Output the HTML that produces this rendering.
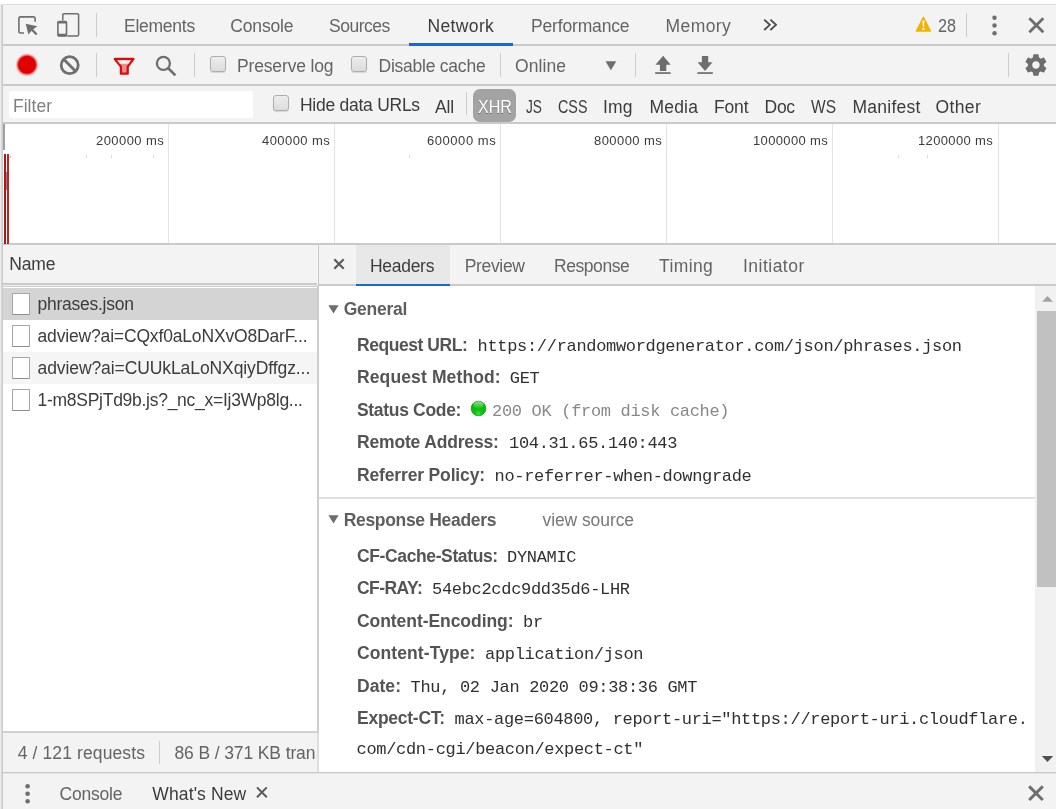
<!DOCTYPE html>
<html lang="en"><head><meta charset="utf-8"><title>DevTools - Network</title>
<style>
html,body{margin:0;padding:0;}
body{width:1056px;height:809px;overflow:hidden;background:#fff;position:relative;font-family:"Liberation Sans",sans-serif;font-size:17px;color:#5a5a5a;}
.abs,.t,svg.i{position:absolute;}
.t{white-space:nowrap;line-height:24px;height:24px;}
.bar{position:absolute;left:3px;right:0;background:#f3f3f3;border-bottom:2px solid #cacaca;}
.vsep{position:absolute;width:1px;background:#ccc;}
.cb{position:absolute;width:14px;height:14px;border:1px solid #adadad;border-radius:3px;background:linear-gradient(#ededed,#dcdcdc);box-shadow:0 1px 1px rgba(0,0,0,.12);}
.grid{position:absolute;top:124px;width:1px;height:119px;background:#e3e3e3;}
.row{position:absolute;left:3px;width:314px;height:32px;}
.ficon{position:absolute;left:12px;width:16px;height:20px;border:1px solid #a6a6a6;border-bottom-color:#8e8e8e;background:#fff;border-radius:1px;}
.m{font-family:"Liberation Mono",monospace;}
.tick{position:absolute;top:155px;width:1px;height:3px;background:#dcdcdc;}
.grp{position:absolute;left:0;top:0;will-change:transform;}

</style></head>
<body>
<!-- outer frame -->
<div class="abs" style="left:0;top:4px;width:1px;height:805px;background:#ececec"></div>
<div class="abs" style="left:1px;top:5px;width:1px;height:804px;background:#d8d8d8"></div>
<div class="abs" style="left:2px;top:5px;width:1px;height:804px;background:#cbcbcb"></div>
<div class="abs" style="left:1px;top:4px;width:1055px;height:1px;background:#dcdcdc"></div>

<!-- main tab bar -->
<div class="bar" id="tabbar" style="top:5px;height:39px;">
  <div class="abs" style="left:406px;top:38.300px;width:104px;height:2.600px;background:#1b66d6"></div>
  <div class="vsep" style="left:93px;top:8px;height:24px"></div>
  <div class="vsep" style="left:963px;top:8px;height:24px"></div>
</div>
<!-- network toolbar -->
<div class="bar" id="toolbar" style="top:46px;height:38px;">
  <div class="vsep" style="left:93px;top:7px;height:24px"></div>
  <div class="vsep" style="left:191px;top:7px;height:24px"></div>
  <div class="vsep" style="left:497px;top:7px;height:24px"></div>
  <div class="vsep" style="left:632px;top:7px;height:24px"></div>
  <div class="vsep" style="left:1005px;top:7px;height:24px"></div>
  <div class="cb" style="left:207px;top:10px"></div>
  <div class="cb" style="left:348px;top:10px"></div>
</div>
<!-- filter bar -->
<div class="bar" id="filterbar" style="top:86px;height:36px;">
  <div class="abs" style="left:6px;top:5px;width:244px;height:27px;background:#fff;border-radius:2px"></div>
  <div class="cb" style="left:270px;top:9px"></div>
  <div class="vsep" style="left:463px;top:6px;height:23px"></div>
  <div class="abs" style="left:470px;top:3px;width:43px;height:32.500px;border-radius:7px;background:#a3a3a3"></div>
</div>
<!-- overview -->
<div class="abs" id="overview" style="left:3px;top:124px;width:1053px;height:119px;background:#fff;border-bottom:2px solid #cacaca"></div>
<div class="grid" style="left:168px"></div><div class="grid" style="left:334px"></div><div class="grid" style="left:500px"></div>
<div class="grid" style="left:666px"></div><div class="grid" style="left:832px"></div><div class="grid" style="left:998px"></div>
<div class="abs" style="left:3px;top:124px;width:2px;height:26px;background:#a0a0a0"></div>
<div class="abs" style="left:3.500px;top:154px;width:2.500px;height:90px;background:#b01818"></div>
<div class="abs" style="left:7px;top:154px;width:2px;height:90px;background:#bf2424"></div>
<div class="abs" style="left:6px;top:172px;width:1px;height:18px;background:#78909c"></div>
<div class="abs" style="left:10px;top:156px;width:1px;height:2px;background:#f3b0b0"></div>
<div class="tick" style="left:86px"></div><div class="tick" style="left:111px"></div><div class="tick" style="left:153px"></div><div class="tick" style="left:409px"></div><div class="tick" style="left:666px"></div><div class="tick" style="left:898px"></div><div class="tick" style="left:927px"></div>

<!-- left pane: request list -->
<div class="abs" id="namehdr" style="left:3px;top:245px;width:314px;height:38px;background:#f3f3f3;border-bottom:2px solid #cacaca"></div>
<div class="abs" style="left:3px;top:285px;width:314px;height:1px;background:#f0f0f0"></div>
<div class="abs" style="left:3px;top:286px;width:314px;height:1px;background:#cdcdcd"></div>
<div class="row" style="top:288px;background:#d4d4d4"></div>
<div class="row" style="top:352px;background:#f5f5f5"></div>
<div class="ficon" style="top:293px"></div>
<div class="ficon" style="top:325px"></div>
<div class="ficon" style="top:357px"></div>
<div class="ficon" style="top:389px"></div>
<div class="abs" id="status" style="left:3px;top:731px;width:314px;height:39px;background:#f3f3f3;border-top:2px solid #d0d0d0">
  <div class="vsep" style="left:156px;top:8px;height:23px"></div>
</div>
<div class="abs" style="left:317px;top:245px;width:1px;height:38px;background:#f7f7f7"></div>
<div class="abs" style="left:318px;top:245px;width:1px;height:40px;background:#c8c8c8"></div>
<div class="abs" style="left:317px;top:285px;width:2px;height:448px;background:#cdcdcd"></div>
<div class="abs" style="left:317px;top:733px;width:2px;height:39px;background:#dedede"></div>

<!-- right pane: details -->
<div class="abs" id="dtabs" style="left:319px;top:245px;width:737px;height:39px;background:#f3f3f3;border-bottom:2px solid #cacaca">
  <div class="abs" style="left:37px;top:0;width:94px;height:39px;background:#e8e8e8"></div>
  <div class="abs" style="left:37px;top:38.600px;width:94px;height:2.500px;background:#1b66d6"></div>
</div>
<div class="abs" style="left:319px;top:497px;width:716px;height:2px;background:#e0e0e0"></div>
<!-- scrollbar -->
<div class="abs" style="left:1035px;top:286px;width:21px;height:486px;background:#f1f1f1"></div>
<div class="abs" style="left:1037px;top:311px;width:19px;height:275.500px;background:#c1c1c1"></div>

<!-- drawer -->
<div class="abs" id="drawer" style="left:3px;top:772px;width:1053px;height:36px;background:#f3f3f3;border-top:1px solid #cbcbcb"></div>
<div class="abs" style="left:3px;top:773px;width:1053px;height:1px;background:#e2e2e2"></div>

<!-- icons -->
<svg class="i" id="icons" style="left:0;top:0" width="1056" height="809" viewBox="0 0 1056 809">
  <defs>
    <radialGradient id="rec" cx="50%" cy="50%" r="50%"><stop offset="0" stop-color="#e00000"/><stop offset="0.70" stop-color="#e00000"/><stop offset="0.80" stop-color="#ee7070"/><stop offset="1" stop-color="#f3c8c8" stop-opacity="0"/></radialGradient>
    <radialGradient id="ball" cx="50%" cy="85%" r="75%"><stop offset="0" stop-color="#3fe03f"/><stop offset="0.350" stop-color="#0cc20c"/><stop offset="1" stop-color="#0ab40a"/></radialGradient>
    <linearGradient id="gloss" x1="0" y1="0" x2="0" y2="1"><stop offset="0" stop-color="#fff" stop-opacity="0.550"/><stop offset="1" stop-color="#fff" stop-opacity="0.050"/></linearGradient>
  </defs>
  <!-- inspect element -->
  <g fill="none" stroke="#6e6e6e" stroke-width="1.6" stroke-linejoin="round" stroke-linecap="butt">
    <path d="M24 33H20.5a1.6 1.6 0 0 1-1.600-1.600V18.500a1.600 1.600 0 0 1 1.600-1.600h13a1.600 1.600 0 0 1 1.600 1.600V21.800"/>
  </g>
  <path d="M25.700 23.700L37.400 26.300L33.200 29.200L37.500 33.700L35.900 35.200L31.500 30.700L28.400 34.600Z" fill="#6e6e6e"/>
  <!-- device toggle -->
  <g fill="none" stroke="#6e6e6e">
    <path d="M62.800 20.500V15a1.200 1.200 0 0 1 1.200-1.200h13.400a1.200 1.200 0 0 1 1.200 1.200v19.700a1.200 1.200 0 0 1-1.200 1.200H67.300" stroke-width="1.500"/>
    <rect x="57.900" y="21.600" width="8.600" height="14.400" rx="1" stroke-width="1.600"/>
    <path d="M57.900 22.300h8.600M57.900 35h8.600" stroke-width="2.400"/>
  </g>
  <!-- record -->
  <circle cx="27" cy="64.800" r="12" fill="url(#rec)"/>
  <!-- clear -->
  <g fill="none" stroke="#6e6e6e" stroke-width="2.800"><circle cx="69.700" cy="65.200" r="8.500"/><path d="M63.700 59.300L75.600 71.200"/></g>
  <!-- filter funnel -->
  <path d="M114.800 59H133.400L127.700 66.600V73.700H120.900V66.600Z" fill="#f08c8c" stroke="#d90c0c" stroke-width="2.300" stroke-linejoin="round"/>
  <path d="M117.200 60.150H131L128.500 63.700H119.800Z" fill="#f3f3f3"/>
  <!-- search -->
  <g fill="none" stroke="#6e6e6e" stroke-width="2.300"><circle cx="163.400" cy="63.400" r="6.500"/><path d="M168 68L175.400 75.400" stroke-width="2.600"/></g>
  <!-- throttling dropdown arrow -->
  <path d="M605.500 61.300H616.300L610.900 70.200Z" fill="#6e6e6e"/>
  <!-- import / export HAR -->
  <g fill="#6e6e6e">
    <path d="M663.100 55.800L670.700 64.700H666.300V70.900H659.900V64.700H655.500Z"/><rect x="655.200" y="72.200" width="15.500" height="1.700"/>
    <path d="M701.900 56H708.200V62.200H712.500L705.050 71.100L697.600 62.200H701.900Z"/><rect x="697.300" y="72.200" width="15.500" height="1.700"/>
  </g>
  <!-- settings gear -->
  <g transform="translate(1023.100 52.200) scale(1.070)"><path fill="#6e6e6e" d="M19.430 12.980c.04-.32.070-.64.070-.98s-.03-.66-.07-.98l2.110-1.650c.19-.15.240-.42.120-.64l-2-3.460c-.12-.22-.39-.3-.61-.22l-2.490 1c-.52-.4-1.080-.73-1.690-.98l-.38-2.650C14.460 2.180 14.250 2 14 2h-4c-.25 0-.46.180-.49.420l-.38 2.650c-.61.250-1.170.59-1.690.98l-2.490-1c-.23-.09-.49 0-.61.220l-2 3.460c-.13.220-.07.490.12.640l2.110 1.650c-.04.320-.07.650-.07.980s.03.660.07.980l-2.110 1.650c-.19.150-.24.420-.12.640l2 3.460c.12.220.39.300.61.220l2.490-1c.52.400 1.080.73 1.690.98l.38 2.650c.03.240.24.420.49.420h4c.25 0 .46-.18.490-.42l.38-2.650c.61-.25 1.170-.59 1.690-.98l2.490 1c.23.090.49 0 .61-.22l2-3.460c.12-.22.070-.49-.12-.64l-2.110-1.650zM12 15.500c-1.930 0-3.500-1.570-3.500-3.500s1.570-3.500 3.500-3.500 3.500 1.570 3.500 3.500-1.570 3.500-3.500 3.500z"/></g>
  <!-- more tabs chevrons -->
  <g fill="none" stroke="#4a4a4a" stroke-width="1.800"><path d="M764.200 19.600L769.800 24.800L764.200 30"/><path d="M770.400 19.600L776 24.800L770.400 30"/></g>
  <!-- warning -->
  <path d="M923.400 17.400L930.400 31.100H916.400Z" fill="#f0b400" stroke="#f0b400" stroke-width="1.400" stroke-linejoin="round"/>
  <path d="M922.500 20.500h1.900l-.35 6.600h-1.200zM922.500 28.100h1.900v1.800h-1.900z" fill="#fff"/>
  <!-- main menu + close -->
  <g fill="#6e6e6e"><circle cx="994.500" cy="17.800" r="2.200"/><circle cx="994.500" cy="25.500" r="2.200"/><circle cx="994.500" cy="33.200" r="2.200"/></g>
  <path d="M1029.300 18.300L1043.300 32.300M1043.300 18.300L1029.300 32.300" stroke="#6e6e6e" stroke-width="2.800" fill="none"/>
  <!-- details close -->
  <path d="M334.300 259.300L343.700 268.700M343.700 259.300L334.300 268.700" stroke="#5a5a5a" stroke-width="2.200" fill="none"/>
  <!-- section triangles -->
  <path d="M328.400 305.300H338.600L333.500 313.400Z" fill="#6e6e6e"/>
  <path d="M328.400 515.300H338.600L333.500 523.400Z" fill="#6e6e6e"/>
  <!-- status ball -->
  <circle cx="478.500" cy="408.500" r="7.300" fill="url(#ball)" stroke="#0b9a0b" stroke-width="0.800"/>
  <ellipse cx="478.500" cy="405" rx="5.200" ry="3.400" fill="url(#gloss)"/>
  <!-- scrollbar arrows -->
  <path d="M1042 301.800H1053L1047.500 296Z" fill="#a3a3a3"/>
  <path d="M1041.800 755.900H1053.200L1047.500 762Z" fill="#505050"/>
  <!-- drawer menu + closes -->
  <g fill="#6e6e6e"><circle cx="27.600" cy="786.200" r="2.300"/><circle cx="27.600" cy="793.700" r="2.300"/><circle cx="27.600" cy="801.300" r="2.300"/></g>
  <path d="M257 787.400L266.800 797.200M266.800 787.400L257 797.200" stroke="#5a5a5a" stroke-width="2" fill="none"/>
  <path d="M1029.200 786.400L1042.800 800M1042.800 786.400L1029.200 800" stroke="#6e6e6e" stroke-width="2.900" fill="none"/>
</svg>

<div class="grp" id="tab-labels">
  <span class="t" style="left:124.00px;top:14.00px;font-size:17.5px;color:#646464;letter-spacing:-0.260px;">Elements</span>
  <span class="t" style="left:230.30px;top:14.00px;font-size:17.5px;color:#646464;letter-spacing:-0.157px;">Console</span>
  <span class="t" style="left:329.00px;top:14.00px;font-size:17.5px;color:#646464;letter-spacing:-0.493px;">Sources</span>
  <span class="t" style="left:427.50px;top:14.00px;font-size:17.5px;color:#3c3c3c;letter-spacing:0.356px;">Network</span>
  <span class="t" style="left:531.00px;top:14.00px;font-size:17.5px;color:#646464;letter-spacing:-0.161px;">Performance</span>
  <span class="t" style="left:665.50px;top:14.00px;font-size:17.5px;color:#646464;letter-spacing:0.418px;">Memory</span>
  <span class="t" style="left:938.00px;top:14.00px;font-size:17.5px;color:#646464;transform:scaleX(0.9246);transform-origin:0 0;">28</span>
</div>
<div class="grp" id="toolbar-labels">
  <span class="t" style="left:237.00px;top:54.00px;font-size:17.5px;color:#646464;letter-spacing:-0.152px;">Preserve log</span>
  <span class="t" style="left:378.50px;top:54.00px;font-size:17.5px;color:#646464;letter-spacing:-0.234px;">Disable cache</span>
  <span class="t" style="left:515.00px;top:54.00px;font-size:17.5px;color:#646464;letter-spacing:0.074px;">Online</span>
</div>
<div class="grp" id="filter-labels">
  <span class="t" style="left:13.00px;top:94.00px;font-size:17.5px;color:#808080;letter-spacing:0.020px;">Filter</span>
  <span class="t" style="left:300.00px;top:93.00px;font-size:17.5px;color:#3c3c3c;letter-spacing:-0.263px;">Hide data URLs</span>
  <span class="t" style="left:435.00px;top:95.00px;font-size:17.5px;color:#3c3c3c;letter-spacing:-0.181px;">All</span>
  <span class="t" style="left:477.50px;top:95.00px;font-size:17.5px;color:#fff;text-shadow:0 1px 0 rgba(0,0,0,.35);transform:scaleX(0.9201);transform-origin:0 0;">XHR</span>
  <span class="t" style="left:526.00px;top:95.00px;font-size:17.5px;color:#3c3c3c;transform:scaleX(0.7829);transform-origin:0 0;">JS</span>
  <span class="t" style="left:557.50px;top:95.00px;font-size:17.5px;color:#3c3c3c;transform:scaleX(0.8198);transform-origin:0 0;">CSS</span>
  <span class="t" style="left:603.00px;top:95.00px;font-size:17.5px;color:#3c3c3c;letter-spacing:0.125px;">Img</span>
  <span class="t" style="left:649.50px;top:95.00px;font-size:17.5px;color:#3c3c3c;letter-spacing:0.184px;">Media</span>
  <span class="t" style="left:714.00px;top:95.00px;font-size:17.5px;color:#3c3c3c;letter-spacing:-0.152px;">Font</span>
  <span class="t" style="left:764.50px;top:95.00px;font-size:17.5px;color:#3c3c3c;letter-spacing:-0.250px;">Doc</span>
  <span class="t" style="left:811.00px;top:95.00px;font-size:17.5px;color:#3c3c3c;transform:scaleX(0.8864);transform-origin:0 0;">WS</span>
  <span class="t" style="left:852.50px;top:95.00px;font-size:17.5px;color:#3c3c3c;letter-spacing:0.248px;">Manifest</span>
  <span class="t" style="left:935.50px;top:95.00px;font-size:17.5px;color:#3c3c3c;letter-spacing:0.382px;">Other</span>
</div>
<div class="grp" id="overview-labels">
  <span class="t" style="left:96.00px;top:128.50px;font-size:13px;color:#3c3c3c;letter-spacing:0.432px;">200000 ms</span>
  <span class="t" style="left:262.00px;top:128.50px;font-size:13px;color:#3c3c3c;letter-spacing:0.432px;">400000 ms</span>
  <span class="t" style="left:427.00px;top:128.50px;font-size:13px;color:#3c3c3c;letter-spacing:0.550px;">600000 ms</span>
  <span class="t" style="left:594.00px;top:128.50px;font-size:13px;color:#3c3c3c;letter-spacing:0.432px;">800000 ms</span>
  <span class="t" style="left:753.00px;top:128.50px;font-size:13px;color:#3c3c3c;letter-spacing:0.362px;">1000000 ms</span>
  <span class="t" style="left:918.00px;top:128.50px;font-size:13px;color:#3c3c3c;letter-spacing:0.362px;">1200000 ms</span>
</div>
<div class="grp" id="request-list">
  <span class="t" style="left:9.25px;top:252.00px;font-size:17.5px;color:#3c3c3c;letter-spacing:-0.125px;">Name</span>
  <span class="t" style="left:37.50px;top:292.00px;font-size:17.5px;color:#3c3c3c;letter-spacing:-0.260px;">phrases.json</span>
  <span class="t" style="left:37.50px;top:324.00px;font-size:17.5px;color:#3c3c3c;letter-spacing:-0.162px;">adview?ai=CQxf0aLoNXvO8DarF...</span>
  <span class="t" style="left:37.50px;top:356.00px;font-size:17.5px;color:#3c3c3c;letter-spacing:-0.090px;">adview?ai=CUUkLaLoNXqiyDffgz...</span>
  <span class="t" style="left:37.50px;top:388.00px;font-size:17.5px;color:#3c3c3c;letter-spacing:-0.271px;">1-m8SPjTd9b.js?_nc_x=Ij3Wp8lg...</span>
</div>
<div class="grp" id="status-summary">
  <span class="t" style="left:17.70px;top:741.00px;font-size:17.5px;color:#646464;letter-spacing:0.116px;">4 / 121 requests</span>
  <span class="t" style="left:174.50px;top:741.00px;font-size:17.5px;color:#646464;letter-spacing:-0.121px;width:141.5px;overflow:hidden;">86 B / 371 KB transferred</span>
</div>
<div class="grp" id="drawer-labels">
  <span class="t" style="left:59.60px;top:782.00px;font-size:17.5px;color:#646464;letter-spacing:-0.234px;">Console</span>
  <span class="t" style="left:152.30px;top:782.00px;font-size:17.5px;color:#3c3c3c;letter-spacing:0.125px;">What's New</span>
</div>
<div class="grp" id="detail-tabs">
  <span class="t" style="left:370.00px;top:254.00px;font-size:17.5px;color:#3c3c3c;letter-spacing:-0.293px;">Headers</span>
  <span class="t" style="left:464.75px;top:254.00px;font-size:17.5px;color:#646464;letter-spacing:-0.346px;">Preview</span>
  <span class="t" style="left:554.00px;top:254.00px;font-size:17.5px;color:#646464;letter-spacing:-0.442px;">Response</span>
  <span class="t" style="left:659.00px;top:254.00px;font-size:17.5px;color:#646464;letter-spacing:0.389px;">Timing</span>
  <span class="t" style="left:743.00px;top:254.00px;font-size:17.5px;color:#646464;letter-spacing:0.483px;">Initiator</span>
</div>
<div class="grp" id="general-headers">
  <span class="t" style="left:343.75px;top:297.00px;font-size:17.5px;color:#5e5e5e;font-weight:700;letter-spacing:-0.260px;">General</span>
  <span class="t" style="left:357.00px;top:333.00px;font-size:17.5px;color:#545454;font-weight:700;letter-spacing:-0.452px;">Request URL:</span>
  <span class="t m" style="left:477.60px;top:335.00px;font-size:17px;color:#303030;letter-spacing:-0.322px;">https://randomwordgenerator.com/json/phrases.json</span>
  <span class="t" style="left:357.00px;top:365.00px;font-size:17.5px;color:#545454;font-weight:700;letter-spacing:0.124px;">Request Method:</span>
  <span class="t m" style="left:509.85px;top:367.00px;font-size:17px;color:#303030;letter-spacing:-0.323px;">GET</span>
  <span class="t" style="left:357.00px;top:398.00px;font-size:17.5px;color:#545454;font-weight:700;letter-spacing:-0.321px;">Status Code:</span>
  <span class="t m" style="left:492.10px;top:400.00px;font-size:17px;color:#888;letter-spacing:-0.322px;">200 OK (from disk cache)</span>
  <span class="t" style="left:357.00px;top:430.00px;font-size:17.5px;color:#545454;font-weight:700;letter-spacing:-0.172px;">Remote Address:</span>
  <span class="t m" style="left:509.10px;top:432.00px;font-size:17px;color:#303030;letter-spacing:-0.322px;">104.31.65.140:443</span>
  <span class="t" style="left:357.00px;top:463.00px;font-size:17.5px;color:#545454;font-weight:700;letter-spacing:-0.151px;">Referrer Policy:</span>
  <span class="t m" style="left:494.60px;top:465.00px;font-size:17px;color:#303030;letter-spacing:-0.322px;">no-referrer-when-downgrade</span>
</div>
<div class="grp" id="response-headers">
  <span class="t" style="left:343.75px;top:508.00px;font-size:17.5px;color:#5e5e5e;font-weight:700;letter-spacing:-0.328px;">Response Headers</span>
  <span class="t" style="left:542.50px;top:508.00px;font-size:17.5px;color:#777;letter-spacing:-0.086px;">view source</span>
  <span class="t" style="left:357.00px;top:544.00px;font-size:17.5px;color:#545454;font-weight:700;letter-spacing:-0.376px;">CF-Cache-Status:</span>
  <span class="t m" style="left:507.10px;top:546.00px;font-size:17px;color:#303030;letter-spacing:-0.323px;">DYNAMIC</span>
  <span class="t" style="left:357.00px;top:576.00px;font-size:17.5px;color:#545454;font-weight:700;letter-spacing:-0.543px;">CF-RAY:</span>
  <span class="t m" style="left:432.10px;top:578.00px;font-size:17px;color:#303030;letter-spacing:-0.322px;">54ebc2cdc9dd35d6-LHR</span>
  <span class="t" style="left:357.00px;top:609.00px;font-size:17.5px;color:#545454;font-weight:700;letter-spacing:-0.059px;">Content-Encoding:</span>
  <span class="t m" style="left:523.10px;top:611.00px;font-size:17px;color:#303030;letter-spacing:-0.323px;">br</span>
  <span class="t" style="left:357.00px;top:641.00px;font-size:17.5px;color:#545454;font-weight:700;letter-spacing:0.096px;">Content-Type:</span>
  <span class="t m" style="left:485.10px;top:643.00px;font-size:17px;color:#303030;letter-spacing:-0.322px;">application/json</span>
  <span class="t" style="left:357.00px;top:674.00px;font-size:17.5px;color:#545454;font-weight:700;letter-spacing:0.052px;">Date:</span>
  <span class="t m" style="left:410.60px;top:676.00px;font-size:17px;color:#303030;letter-spacing:-0.322px;">Thu, 02 Jan 2020 09:38:36 GMT</span>
  <span class="t" style="left:357.00px;top:706.00px;font-size:17.5px;color:#545454;font-weight:700;letter-spacing:-0.257px;">Expect-CT:</span>
  <span class="t m" style="left:454.60px;top:708.00px;font-size:17px;color:#303030;letter-spacing:-0.322px;">max-age=604800, report-uri=&quot;https://report-uri.cloudflare.</span>
  <span class="t m" style="left:356.60px;top:738.00px;font-size:17px;color:#303030;letter-spacing:-0.322px;">com/cdn-cgi/beacon/expect-ct&quot;</span>
</div>
</body></html>
